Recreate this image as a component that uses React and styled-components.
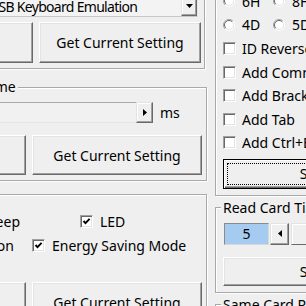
import React from "react";
import styled, { createGlobalStyle } from "styled-components";

const GlobalStyle = createGlobalStyle`
  html, body { margin: 0; padding: 0; background: #efefef; }
  body { font-family: "Noto Sans", "Liberation Sans", sans-serif; font-size: 14px; color: #000; }
  * { box-sizing: border-box; }
`;

const Page = styled.div`
  width: 306px;
  height: 306px;
  overflow: hidden;
  background: #efefef;
`;

const Canvas = styled.div`
  display: flex;
  align-items: flex-start;
  gap: 8px;
  margin-left: -110px;
  margin-top: -30px;
`;

const Column = styled.div`
  display: flex;
  flex-direction: column;
  flex: none;
  width: ${(p) => p.$w}px;
`;

const Group = styled.fieldset`
  flex: none;
  margin: ${(p) => p.$mt || 0}px 0 0 0;
  padding: 0;
  min-width: 0;
  width: ${(p) => (p.$w ? `${p.$w}px` : "100%")};
  border: 1px solid #a9a9a9;
  box-shadow: 1px 1px 0 #fff, inset 1px 1px 0 #fff;
`;

const Legend = styled.legend`
  margin-left: ${(p) => p.$ml}px;
  padding: 0 2px;
  line-height: 18px;
  background: #efefef;
  white-space: nowrap;
`;

const Body = styled.div`
  display: flex;
  flex-direction: column;
  padding: ${(p) => p.$pad};
`;

const Row = styled.div`
  display: flex;
  align-items: center;
  flex: none;
  height: ${(p) => p.$h}px;
  margin-top: ${(p) => p.$mt || 0}px;
  margin-right: ${(p) => p.$mr || 0}px;
  gap: ${(p) => p.$gap || 0}px;
  justify-content: ${(p) => (p.$end ? "flex-end" : "flex-start")};
  white-space: nowrap;
`;

const Button = styled.button`
  position: relative;
  flex: none;
  width: ${(p) => p.$w}px;
  height: ${(p) => p.$h}px;
  margin: ${(p) => p.$mt || 0}px 0 0 ${(p) => p.$ml || 0}px;
  padding: 0;
  font: inherit;
  color: #000;
  background: #efefef;
  border: 1px solid;
  border-color: #fff #696969 #696969 #fff;
  box-shadow: inset -1px -1px 0 #a0a0a0, inset 1px 1px 0 #e3e3e3;
  white-space: nowrap;
`;

const DefaultButton = styled(Button)`
  border-color: #000;
  box-shadow: inset 1px 1px 0 #fff, inset -1px -1px 0 #696969, inset -2px -2px 0 #a0a0a0;
  &::after {
    content: "";
    position: absolute;
    inset: 3px;
    border: 1px dotted #000;
  }
`;

const Combo = styled.div`
  display: flex;
  flex: none;
  width: ${(p) => p.$w}px;
  height: 22px;
  background: #f3f3f3;
  border: 1px solid;
  border-color: #a0a0a0 #e8e8e8 #c8c8c8 #a0a0a0;
`;

const ComboText = styled.div`
  flex: 1;
  display: flex;
  align-items: center;
  padding-left: 1px;
  letter-spacing: -0.7px;
  white-space: nowrap;
`;

const ArrowBtn = styled.span`
  flex: none;
  display: flex;
  align-items: center;
  justify-content: center;
  width: ${(p) => p.$w}px;
  height: ${(p) => (p.$h ? `${p.$h}px` : "100%")};
  margin-left: ${(p) => p.$ml || 0}px;
  background: #efefef;
  border: 1px solid;
  border-color: #e3e3e3 #696969 #696969 #e3e3e3;
  box-shadow: inset -1px -1px 0 #a0a0a0, inset 1px 1px 0 #fff;
`;

const Track = styled.span`
  flex: none;
  width: ${(p) => p.$w}px;
  height: 100%;
  margin-left: ${(p) => p.$ml || 0}px;
  border-top: 1px solid #a9a9a9;
  border-bottom: 1px solid #e6e6e6;
  background: #f1f1f1;
`;

const Thumb = styled.span`
  flex: none;
  width: ${(p) => p.$w}px;
  height: 100%;
  margin-left: ${(p) => p.$ml || 0}px;
  background: #efefef;
  border: 1px solid;
  border-color: #e3e3e3 #696969 #696969 #e3e3e3;
  box-shadow: inset 1px 1px 0 #fff;
`;

const Unit = styled.span`
  margin-left: 7px;
`;

const Edit = styled.span`
  flex: none;
  display: flex;
  align-items: center;
  justify-content: center;
  width: ${(p) => p.$w}px;
  height: 100%;
  margin-left: ${(p) => p.$ml || 0}px;
  background: #a6cbf1;
  border: 1px solid;
  border-color: #8a8a8a #d8d8d8 #d8d8d8 #8a8a8a;
`;

const Option = styled.label`
  display: flex;
  align-items: center;
  flex: none;
  gap: ${(p) => p.$gap ?? 7}px;
  width: ${(p) => (p.$w ? `${p.$w}px` : "auto")};
  margin-left: ${(p) => p.$ml || 0}px;
  justify-content: ${(p) => (p.$end ? "flex-end" : "flex-start")};
  white-space: nowrap;
`;

const Box = styled.span`
  flex: none;
  display: flex;
  align-items: center;
  justify-content: center;
  width: 13px;
  height: 13px;
  background: #fff;
  border: 1px solid;
  border-color: #a0a0a0 #fff #fff #a0a0a0;
  box-shadow: inset 1px 1px 0 #696969, inset -1px -1px 0 #e3e3e3;
`;

const Check = ({ checked }) => (
  <Box>
    {checked && (
      <svg width="9" height="9" viewBox="0 0 9 9">
        <polyline points="1.5,4 3.5,6.2 7.6,1.8" fill="none" stroke="#000" strokeWidth="1.9" />
      </svg>
    )}
  </Box>
);

const Radio = () => (
  <svg width="12" height="12" viewBox="0 0 12 12" style={{ flex: "none" }}>
    <circle cx="6" cy="6" r="5" fill="#fff" />
    <path d="M2.1 9.9 A5.5 5.5 0 0 1 9.9 2.1" stroke="#a0a0a0" fill="none" />
    <path d="M2.8 9.2 A4.5 4.5 0 0 1 9.2 2.8" stroke="#696969" fill="none" />
    <path d="M9.9 2.1 A5.5 5.5 0 0 1 2.1 9.9" stroke="#fff" fill="none" />
    <path d="M9.2 2.8 A4.5 4.5 0 0 1 2.8 9.2" stroke="#e3e3e3" fill="none" />
  </svg>
);

const Tri = ({ dir }) => {
  const pts = {
    down: "0,0 7,0 3.5,4",
    right: "0,0 4,3.5 0,7",
    left: "4,0 0,3.5 4,7",
  }[dir];
  const w = dir === "down" ? 7 : 4;
  const h = dir === "down" ? 4 : 7;
  return (
    <svg width={w} height={h} viewBox={`0 0 ${w} ${h}`}>
      <polygon points={pts} fill="#000" />
    </svg>
  );
};

const CheckOption = ({ label, checked, ...rest }) => (
  <Option {...rest}>
    <Check checked={checked} />
    <span>{label}</span>
  </Option>
);

const RadioOption = ({ label, ...rest }) => (
  <Option {...rest}>
    <Radio />
    <span>{label}</span>
  </Option>
);

export default function App() {
  return (
    <>
      <GlobalStyle />
      <Page>
        <Canvas>
          <Column $w={317}>
            <Group $w={315}>
              <Body $pad="24px 3px 5px 0">
                <Row $h={22} $end $mr={3}>
                  <Combo $w={211}>
                    <ComboText>USB Keyboard Emulation</ComboText>
                    <ArrowBtn $w={16}>
                      <Tri dir="down" />
                    </ArrowBtn>
                  </Combo>
                </Row>
                <Row $h={41} $mt={5} $end $gap={6}>
                  <Button $w={162} $h={41}>Set</Button>
                  <Button $w={162} $h={41}>Get Current Setting</Button>
                </Row>
              </Body>
            </Group>

            <Group $mt={9}>
              <Legend $ml={36}>Interval Time</Legend>
              <Body $pad="6px 4px 5px 9px">
                <Row $h={21}>
                  <Track $w={236} />
                  <ArrowBtn $w={17}>
                    <Tri dir="right" />
                  </ArrowBtn>
                  <Unit>ms</Unit>
                </Row>
                <Row $h={40} $mt={12} $end $gap={6}>
                  <Button $w={140} $h={40}>Set</Button>
                  <Button $w={170} $h={40}>Get Current Setting</Button>
                </Row>
              </Body>
            </Group>

            <Group $mt={13}>
              <Body $pad="16px 4px 10px 0">
                <Row $h={20}>
                  <CheckOption $w={129} $end label="Beep" />
                  <CheckOption $ml={60} label="LED" checked />
                </Row>
                <Row $h={20} $mt={4}>
                  <CheckOption $w={123} $end label="Vibration" />
                  <CheckOption $ml={18} label="Energy Saving Mode" checked />
                </Row>
                <Row $h={40} $mt={27} $end $gap={6}>
                  <Button $w={140} $h={40}>Set</Button>
                  <Button $w={170} $h={40}>Get Current Setting</Button>
                </Row>
              </Body>
            </Group>
          </Column>

          <Column $w={200}>
            <Group>
              <Body $pad="18.6px 0 6px 7px">
                <Row $h={23.6}>
                  <RadioOption $w={50} label="6H" />
                  <RadioOption label="8H" />
                </Row>
                <Row $h={23.6}>
                  <RadioOption $w={50} label="4D" />
                  <RadioOption label="5D" />
                </Row>
                <Row $h={23.6}>
                  <CheckOption $gap={6} label="ID Reverse" />
                </Row>
                <Row $h={23.6}>
                  <CheckOption $gap={6} label="Add Comma" />
                </Row>
                <Row $h={23.6}>
                  <CheckOption $gap={6} label="Add Bracket" />
                </Row>
                <Row $h={23.6}>
                  <CheckOption $gap={6} label="Add Tab" />
                </Row>
                <Row $h={23.6}>
                  <CheckOption $gap={6} label="Add Ctrl+Enter" />
                </Row>
                <DefaultButton $w={174} $h={30} $mt={4.2}>Set</DefaultButton>
              </Body>
            </Group>

            <Group $mt={3}>
              <Legend $ml={5}>Read Card Time</Legend>
              <Body $pad="6px 0 6px 7px">
                <Row $h={22}>
                  <Edit $w={45} $ml={1}>5</Edit>
                  <ArrowBtn $w={19} $ml={1}>
                    <Tri dir="left" />
                  </ArrowBtn>
                  <Thumb $w={60} $ml={2} />
                </Row>
                <Button $w={174} $h={29} $mt={12}>Set</Button>
              </Body>
            </Group>

            <Group $mt={3}>
              <Legend $ml={5}>Same Card Read Interval</Legend>
              <Body $pad="10px 0 20px 7px" />
            </Group>
          </Column>
        </Canvas>
      </Page>
    </>
  );
}
